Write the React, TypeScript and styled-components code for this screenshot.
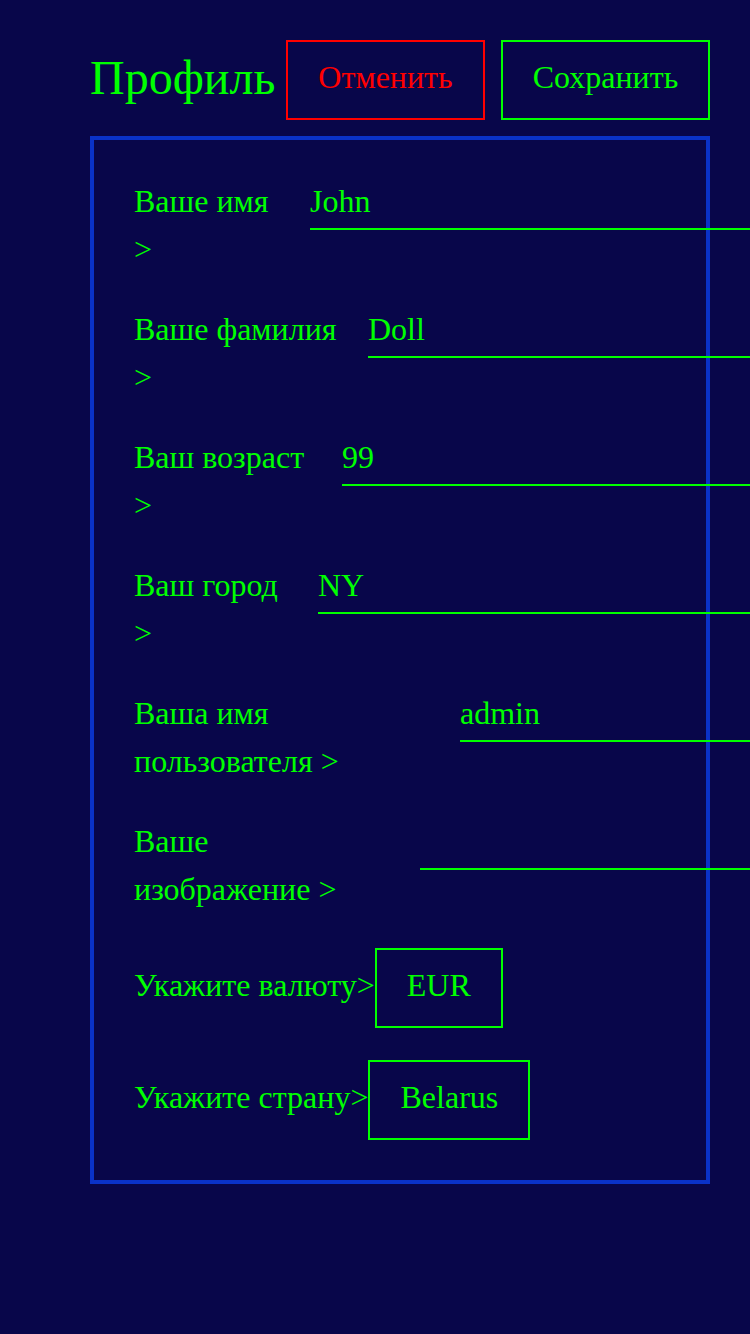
import styled, { createGlobalStyle } from "styled-components";

const GlobalStyle = createGlobalStyle`
  html, body {
    margin: 0;
    padding: 0;
    background-color: #08064a;
    overflow-x: hidden;
  }

  body {
    font-family: "Liberation Serif", "Times New Roman", serif;
    color: #00ff00;
  }
`;

const Page = styled.div`
  min-height: 1334px;
  box-sizing: border-box;
  padding: 40px 40px 40px 90px;
`;

const Header = styled.header`
  display: flex;
  align-items: center;
  gap: 16px;
  margin-bottom: 16px;
`;

const Title = styled.h1`
  margin: 0 -5px 0 0;
  padding-bottom: 6px;
  font-size: 48px;
  font-weight: normal;
  color: #00ff00;
`;

const HeaderButton = styled.button<{ $tone: "cancel" | "save" }>`
  height: 80px;
  box-sizing: border-box;
  padding: 0 30px 6px;
  background: transparent;
  border: 2px solid ${({ $tone }) => ($tone === "cancel" ? "#ff0000" : "#00ff00")};
  color: ${({ $tone }) => ($tone === "cancel" ? "#ff0000" : "#00ff00")};
  font-family: inherit;
  font-size: 32px;
  cursor: pointer;
`;

const Card = styled.section`
  width: 620px;
  box-sizing: border-box;
  border: 4px solid #0a32c8;
  padding: 40px;
  display: flex;
  flex-direction: column;
  gap: 32px;
`;

const FieldRow = styled.div`
  display: flex;
  align-items: flex-start;
  min-height: 96px;
`;

const FieldLabel = styled.label<{ $width: number }>`
  flex: 0 0 ${({ $width }) => $width}px;
  margin-top: -3px;
  font-size: 32px;
  line-height: 48px;
`;

const FieldInput = styled.input`
  flex: 0 0 460px;
  height: 50px;
  box-sizing: border-box;
  margin-left: 30px;
  padding: 0 0 6px;
  background: transparent;
  border: none;
  border-bottom: 2px solid #00ff00;
  color: #00ff00;
  font-family: inherit;
  font-size: 32px;
  outline: none;
`;

const PickerRow = styled.div`
  display: flex;
  align-items: center;
`;

const PickerLabel = styled.span`
  padding-bottom: 6px;
  font-size: 32px;
  line-height: 48px;
`;

const PickerBox = styled.button`
  height: 80px;
  box-sizing: border-box;
  padding: 0 30px 6px;
  background: transparent;
  border: 2px solid #00ff00;
  color: #00ff00;
  font-family: inherit;
  font-size: 32px;
  cursor: pointer;
`;

const fields = [
  { label: "Ваше имя >", value: "John", width: 146 },
  { label: "Ваше фамилия >", value: "Doll", width: 204 },
  { label: "Ваш возраст >", value: "99", width: 178 },
  { label: "Ваш город >", value: "NY", width: 154 },
  { label: "Ваша имя пользователя >", value: "admin", width: 296 },
  { label: "Ваше изображение >", value: "", width: 256 },
];

const pickers = [
  { label: "Укажите валюту>", value: "EUR" },
  { label: "Укажите страну>", value: "Belarus" },
];

const App = () => {
  return (
    <>
      <GlobalStyle />
      <Page>
        <Header>
          <Title>Профиль</Title>
          <HeaderButton $tone="cancel">Отменить</HeaderButton>
          <HeaderButton $tone="save">Сохранить</HeaderButton>
        </Header>

        <Card>
          {fields.map((f) => (
            <FieldRow key={f.label}>
              <FieldLabel $width={f.width}>{f.label}</FieldLabel>
              <FieldInput defaultValue={f.value} />
            </FieldRow>
          ))}

          {pickers.map((p) => (
            <PickerRow key={p.label}>
              <PickerLabel>{p.label}</PickerLabel>
              <PickerBox>{p.value}</PickerBox>
            </PickerRow>
          ))}
        </Card>
      </Page>
    </>
  );
};

export default App;
